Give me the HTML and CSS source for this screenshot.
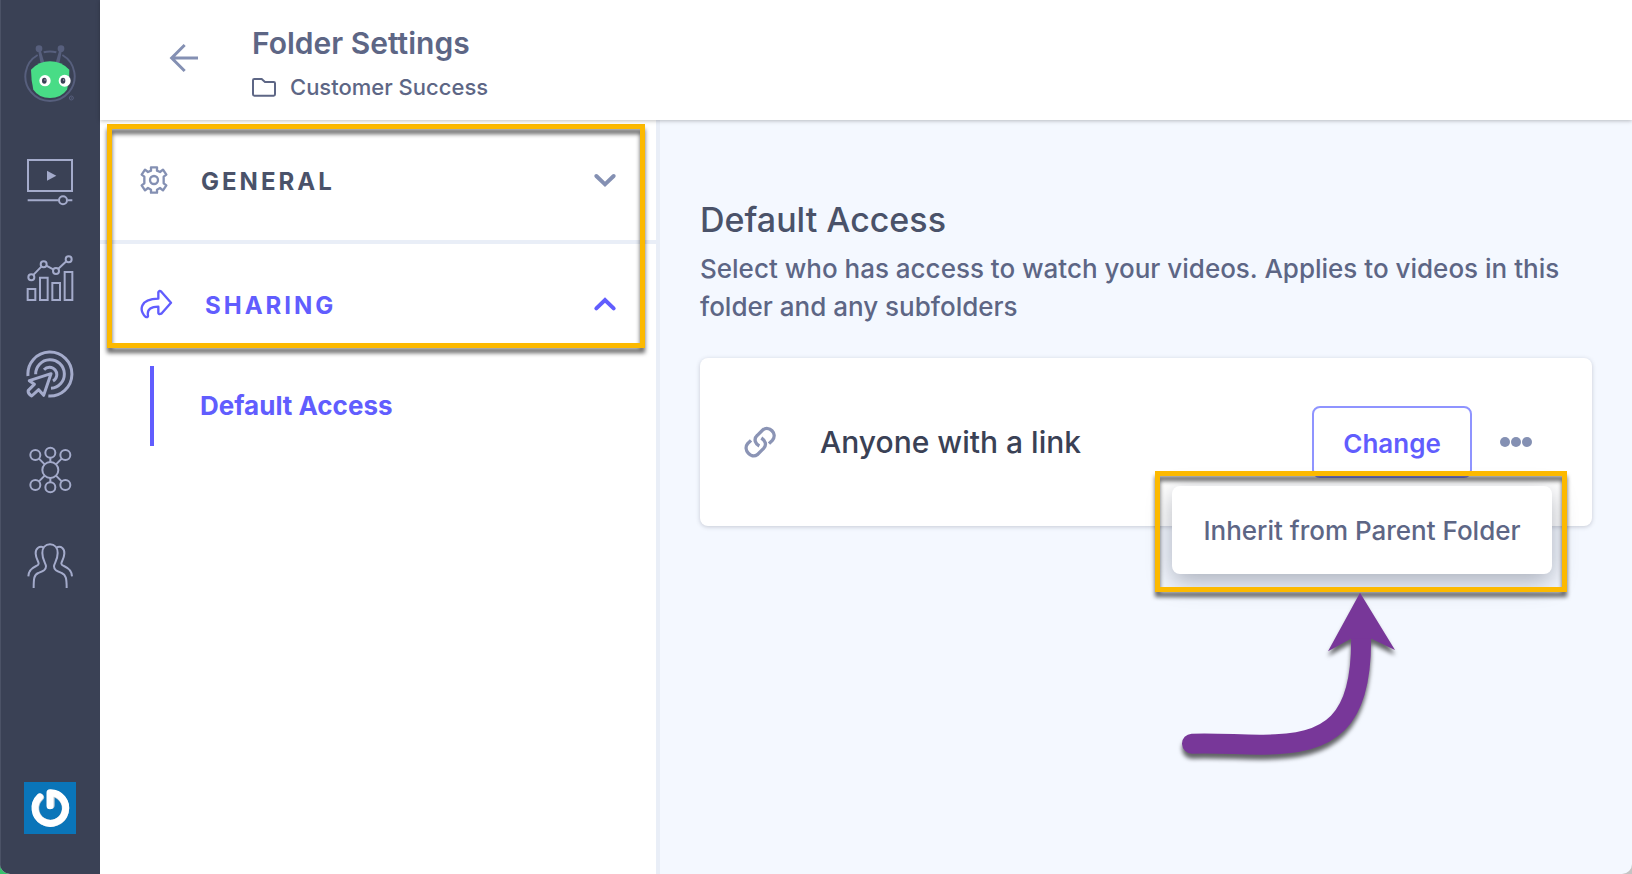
FILE: index.html
```html
<!DOCTYPE html>
<html lang="en">
<head>
    <meta charset="UTF-8">
    <meta name="viewport" content="width=device-width, initial-scale=1.0">
    <title>Folder Settings</title>
    <link rel="stylesheet" href="styles.css">
</head>
<body>
    <div class="app">
        <nav class="sidebar" aria-label="Main">
            <a href="#" class="logo" aria-label="Home">
                <svg width="54" height="60" viewBox="72 70 162 180">
                    <path d="M134 98q19-5 38 0M190 106a74 74 0 1 1-74 0" fill="none" stroke="#575f7d" stroke-width="6"/>
                    <path d="M117 90l7-2 13 44h-12zM189 90l-7-2-13 44h12z" fill="#575f7d"/>
                    <circle cx="120" cy="87" r="10" fill="#575f7d"/>
                    <circle cx="186" cy="87" r="10" fill="#575f7d"/>
                    <path d="M96 150q24-25 57-25t58 25q0 34-7 60-18 25-51 25t-50-25q-7-30-7-60z" fill="#48dc86"/>
                    <circle cx="138" cy="183" r="17" fill="#fff"/>
                    <circle cx="197" cy="183" r="18" fill="#fff"/>
                    <ellipse cx="136" cy="183" rx="7" ry="9" fill="#3a4155"/>
                    <ellipse cx="192" cy="183" rx="7" ry="9" fill="#3a4155"/>
                    <circle cx="138" cy="181" r="2" fill="#b9bdcc"/>
                    <circle cx="194" cy="181" r="2" fill="#b9bdcc"/>
                    <circle cx="217" cy="235" r="6" fill="none" stroke="#575f7d" stroke-width="3"/>
                    <circle cx="217" cy="235" r="2" fill="#575f7d"/>
                </svg>
            </a>
            <a href="#" class="side-link" aria-label="Videos">
                <svg viewBox="78 414 144 144">
                    <path d="M84 420h132v93H84zM83 541h93M203 541h14"/>
                    <circle cx="189" cy="541" r="12"/>
                    <path class="solid" d="M141 452l28 15-28 15z"/>
                </svg>
            </a>
            <a href="#" class="side-link" aria-label="Analytics">
                <svg viewBox="78 72 144 144">
                    <path d="M83 177h23v33H83zM120 143h23v67h-23zM157 159h23v51h-23zM194 126h23v84h-23zM101 134l23-24M139 107l22 12M175 116l24-22"/>
                    <circle cx="94" cy="142" r="9"/>
                    <circle cx="131" cy="103" r="9"/>
                    <circle cx="168" cy="123" r="9"/>
                    <circle cx="206" cy="88" r="9"/>
                </svg>
            </a>
            <a href="#" class="side-link" aria-label="Campaigns">
                <svg viewBox="78 360 144 144">
                    <g class="thick">
                        <path d="M84 438a66 66 0 1 1 61 60M107 433a43 43 0 1 1 46 42M132 419a22 22 0 1 1 27 34"/>
                        <path d="M153 431l-65 21 15 11-18 18q-3 8 10 17l21-19 15 17z" stroke-linejoin="round"/>
                    </g>
                </svg>
            </a>
            <a href="#" class="side-link" aria-label="Integrations">
                <svg viewBox="78 78 144 144">
                    <circle cx="151" cy="150" r="24"/>
                    <circle cx="106" cy="105" r="15"/>
                    <circle cx="151" cy="98" r="15"/>
                    <circle cx="196" cy="105" r="15"/>
                    <circle cx="106" cy="195" r="15"/>
                    <circle cx="151" cy="202" r="15"/>
                    <circle cx="196" cy="195" r="15"/>
                    <path d="M117 116l17 17M185 116l-17 17M117 184l17-17M185 184l-17-17M151 113v13M151 174v13"/>
                </svg>
            </a>
            <a href="#" class="side-link" aria-label="Users">
                <svg viewBox="78 366 144 144">
                    <path d="M101 504c0-28 1-40 14-45 15-6 23-9 23-20 0-9-11-18-11-40 0-16 9-26 23-26s23 10 23 26c0 22-11 31-11 40 0 11 8 14 23 20 13 5 15 17 15 45"/>
                    <path d="M131 382c-14-5-25 4-24 19 1 17 9 22 9 30 0 10-29 6-31 38M170 382c14-5 24 4 23 19-1 17-9 22-9 30 0 10 30 6 32 38"/>
                </svg>
            </a>
            <a href="#" class="avatar" aria-label="Account">
                <svg width="52" height="52" viewBox="72 66 156 156">
                    <path d="M72 66h156v156H72z" fill="#0a75b9"/>
                    <path d="M121 112a45 45 0 1 0 32-12v36" fill="none" stroke="#bdc9d2" stroke-width="22" stroke-linecap="round" stroke-linejoin="round"/>
                    <path d="M119 111a46 46 0 1 0 31-13v39" fill="none" stroke="#fff" stroke-width="21" stroke-linecap="round" stroke-linejoin="round"/>
                </svg>
            </a>
        </nav>

        <div class="page">
            <header class="header">
                <a href="#" class="back" aria-label="Back">
                    <svg width="32" height="32" viewBox="204 126 96 96">
                        <path d="M294 174h-80M254 135l-39 39 39 39" fill="none" stroke="#8490b3" stroke-width="9"/>
                    </svg>
                </a>
                <div class="header-text">
                    <h1>Folder Settings</h1>
                    <div class="folder">
                        <svg width="24" height="20" viewBox="456 228 72 60">
                            <path d="M463 234h22l10 9h26q4 0 4 4v33q0 4-4 4h-58q-4 0-4-4v-42q0-4 4-4z" fill="none" stroke="#5d6685" stroke-width="6"/>
                        </svg>
                        <span>Customer Success</span>
                    </div>
                </div>
            </header>

            <div class="content">
                <aside class="settings-nav">
                    <div class="sections">
                        <button type="button" class="section" aria-expanded="false">
                            <svg class="section-icon" width="30" height="30" viewBox="117 144 90 90">
                                <path d="M153 151h18v10l9 4 9-7 10 15-8 6v20l8 6-10 15-9-7-9 5v9h-18v-9l-9-5-9 7-10-15 8-6v-20l-8-6 10-15 9 7 9-4z" fill="none" stroke="#8490b3" stroke-width="7" stroke-linejoin="round"/>
                                <circle cx="162" cy="189" r="12" fill="none" stroke="#8490b3" stroke-width="7"/>
                            </svg>
                            <span>GENERAL</span>
                            <svg class="chevron" width="24" height="16" viewBox="579 170 72 48">
                                <path d="M589 182l26 25 26-25" fill="none" stroke="#8490b3" stroke-width="12" stroke-linecap="round"/>
                            </svg>
                        </button>
                        <button type="button" class="section active" aria-expanded="true">
                            <svg class="section-icon" width="34" height="32" viewBox="117 512 102 96">
                                <path d="M175 544v-19q3-7 9-2l29 33-29 33q-7 3-9-2v-19c-19 0-35 5-31 28q-1 5-7 3c-20-20-19-54 38-55z" fill="none" stroke="#615dfe" stroke-width="7" stroke-linejoin="round"/>
                            </svg>
                            <span>SHARING</span>
                            <svg class="chevron" width="24" height="16" viewBox="576 542 72 48">
                                <path d="M586 579l26-25 26 25" fill="none" stroke="#615dfe" stroke-width="12" stroke-linecap="round"/>
                            </svg>
                        </button>
                        <div class="highlight highlight-sections"></div>
                    </div>
                    <a href="#" class="sub-link">Default Access</a>
                </aside>

                <main class="main">
                    <h2>Default Access</h2>
                    <p>Select who has access to watch your videos. Applies to videos in this folder and any subfolders</p>
                    <div class="card">
                        <svg width="36" height="36" viewBox="156 252 108 108">
                            <path d="M183 301l-10 10c-15 18 10 47 29 33l19-19c10-11 5-23-7-31M237 311l10-10c17-20-10-46-29-31l-16 16c-13 12-5 26 6 32" fill="none" stroke="#8b94b5" stroke-width="10"/>
                        </svg>
                        <span class="access">Anyone with a link</span>
                        <div class="actions">
                            <button type="button" class="change">Change</button>
                            <button type="button" class="more" aria-label="More options">
                                <svg width="32" height="10" viewBox="0 0 32 10">
                                    <circle cx="5" cy="5" r="5"/>
                                    <circle cx="16" cy="5" r="5"/>
                                    <circle cx="27" cy="5" r="5"/>
                                </svg>
                            </button>
                            <div class="menu">
                                <button type="button">Inherit from Parent Folder</button>
                                <div class="highlight highlight-menu"></div>
                                <svg class="arrow" width="220" height="180" viewBox="30 36 660 540">
                                    <path d="M66 491C145 488 210 495 280 494C480 494 580 430 573 160" fill="none" stroke="#783799" stroke-width="60" stroke-linecap="round"/>
                                    <path d="M570 38l105 172-71-34h-61l-69 38z" fill="#783799"/>
                                </svg>
                            </div>
                        </div>
                    </div>
                </main>
            </div>
        </div>
    </div>
</body>
</html>
```
FILE: styles.css
```css
* {
    box-sizing: border-box;
}
body {
    font-family: Inter, "Open Sans", sans-serif;
    font-weight: 500;
    color: #5d6685;
    background: linear-gradient(90deg, #35c26c 50%, #c4c4c4 50%);
    margin: 0;
}
button {
    font: inherit;
    color: inherit;
    background: none;
    border: none;
    padding: 0;
    cursor: pointer;
}
a {
    color: inherit;
    text-decoration: none;
}
svg {
    display: block;
    flex-shrink: 0;
}
h1, h2, p {
    margin: 0;
}
.app {
    display: flex;
    min-height: 100vh;
    background-color: #f4f8ff;
    border-radius: 0 0 10px 10px;
    overflow: hidden;
}

/* left bar */
.sidebar {
    display: flex;
    flex-direction: column;
    align-items: center;
    gap: 48px;
    width: 100px;
    flex-shrink: 0;
    padding: 43px 0 40px;
    background-color: #3a4155;
    box-shadow: inset 1px 0 0 #4b5266;
}
.logo {
    margin-bottom: 7px;
}
.side-link svg {
    width: 48px;
    height: 48px;
    fill: none;
    stroke: #a4abcb;
    stroke-width: 6;
}
.side-link .solid {
    fill: #a4abcb;
    stroke: none;
}
.side-link .thick {
    stroke-width: 9;
}
.avatar {
    margin-top: auto;
}

.page {
    flex: 1;
    display: flex;
    flex-direction: column;
    min-width: 0;
}
.header {
    display: flex;
    align-items: flex-start;
    gap: 52px;
    height: 120px;
    padding: 24px 68px 0;
    background-color: #fff;
    box-shadow: 0 1px 4px rgba(0, 0, 0, 0.25);
    z-index: 1;
}
.back {
    margin-top: 18px;
}
h1 {
    font-size: 30px;
    line-height: 38px;
    font-weight: 600;
}
.folder {
    display: flex;
    align-items: center;
    gap: 14px;
    margin-top: 8px;
    font-size: 22px;
    line-height: 34px;
}
.content {
    flex: 1;
    display: flex;
}

/* settings menu */
.settings-nav {
    width: 560px;
    flex-shrink: 0;
    background-color: #fff;
    border-right: 4px solid #e9eef7;
}
.sections {
    position: relative;
}
.section {
    display: flex;
    align-items: center;
    gap: 32px;
    width: 100%;
    padding: 44px 39px 40px;
    font-size: 24px;
    line-height: 36px;
    font-weight: 700;
    letter-spacing: 3px;
    color: #4a5269;
}
.section + .section {
    border-top: 4px solid #e9eef7;
}
.section.active {
    color: #615dfe;
}
.section-icon {
    margin-bottom: 4px;
}
.chevron {
    margin: 0 0 4px auto;
}
.sub-link {
    display: block;
    margin: 2px 0 0 50px;
    padding-left: 46px;
    border-left: 4px solid #615dfe;
    font-size: 26px;
    line-height: 80px;
    font-weight: 700;
    color: #615dfe;
}

/* access settings */
.main {
    flex: 1;
    min-width: 0;
    padding: 76px 40px 40px;
}
h2 {
    font-size: 34px;
    line-height: 48px;
    font-weight: 500;
    color: #4a5269;
}
.main p {
    margin-top: 6px;
    font-size: 26px;
    line-height: 38px;
}
.card {
    display: flex;
    align-items: center;
    margin-top: 32px;
    padding: 48px 60px 48px 42px;
    background-color: #fff;
    border-radius: 8px;
    box-shadow: 0 1px 4px rgba(58, 65, 85, 0.25);
}
.access {
    margin-left: 42px;
    font-size: 30px;
    line-height: 40px;
    color: #3a4155;
}
.actions {
    position: relative;
    display: flex;
    align-items: center;
    gap: 28px;
    margin-left: auto;
}
.change {
    width: 160px;
    padding-top: 4px;
    border: 2px solid #8f94ff;
    border-radius: 8px;
    font-size: 26px;
    line-height: 64px;
    font-weight: 600;
    color: #615dfe;
}
.more svg {
    fill: #8490b3;
}
.menu {
    position: absolute;
    top: 80px;
    right: -20px;
    width: 380px;
    background-color: #fff;
    border-radius: 8px;
    box-shadow: 0 8px 24px rgba(58, 65, 85, 0.4);
}
.menu button {
    width: 100%;
    padding-top: 2px;
    font-size: 26px;
    line-height: 86px;
    white-space: nowrap;
}

/* callouts */
.highlight {
    position: absolute;
    border: 5px solid #fcb900;
    filter: drop-shadow(0 5px 2px rgba(0, 0, 0, 0.6));
    pointer-events: none;
}
.highlight-sections {
    top: 4px;
    right: 11px;
    bottom: 16px;
    left: 7px;
}
.highlight-menu {
    top: -15px;
    right: -15px;
    bottom: -18px;
    left: -17px;
}
.arrow {
    position: absolute;
    top: calc(100% + 18px);
    left: 8px;
    overflow: visible;
    filter: drop-shadow(0 5px 2px rgba(0, 0, 0, 0.6));
}
```
